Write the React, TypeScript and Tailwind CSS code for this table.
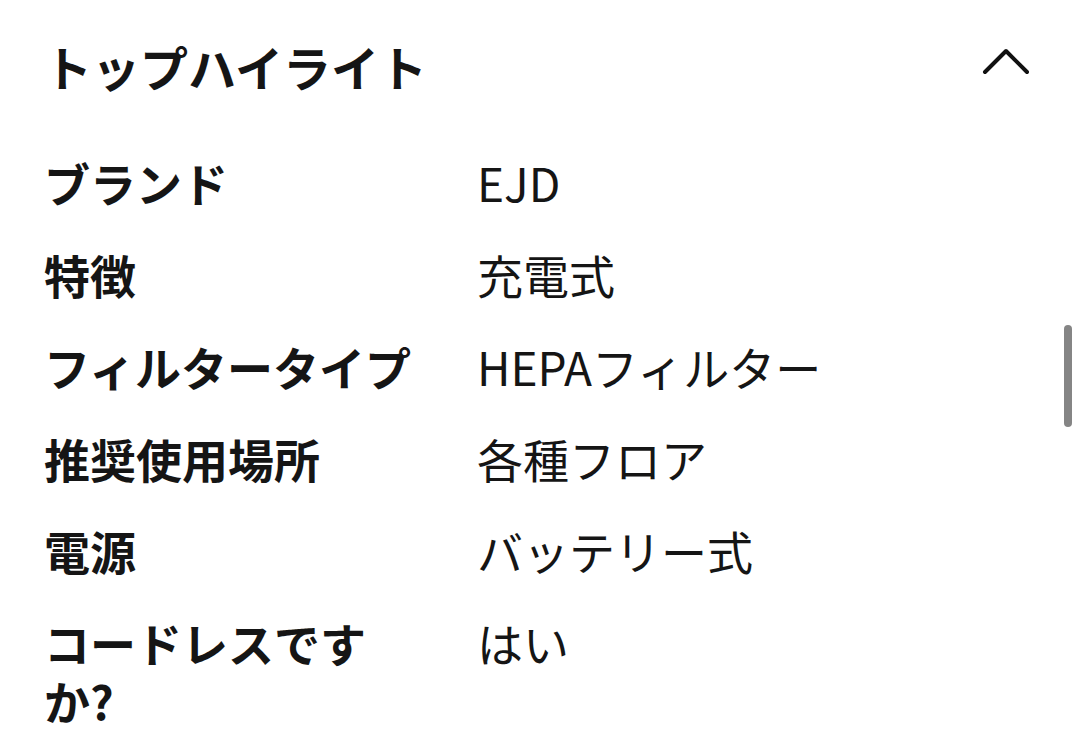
const rows: { label: string; value: string }[] = [
  { label: "ブランド", value: "EJD" },
  { label: "特徴", value: "充電式" },
  { label: "フィルタータイプ", value: "HEPAフィルター" },
  { label: "推奨使用場所", value: "各種フロア" },
  { label: "電源", value: "バッテリー式" },
  { label: "コードレスですか?", value: "はい" },
];

function ChevronUp() {
  return (
    <svg viewBox="0 0 48 48" className="h-[48px] w-[48px]" fill="none">
      <path d="M3 30 L24 9 L45 30" stroke="#111" strokeWidth="4" strokeLinecap="round" strokeLinejoin="round" />
    </svg>
  );
}

export default function App() {
  return (
    <div
      className="relative h-[744px] w-[1080px] overflow-hidden bg-white text-[#151515]"
      style={{ fontFamily: '"Noto Sans CJK JP", "Noto Sans", sans-serif' }}
    >
      <div className="pl-[44px] pr-[50px] pt-[37px]">
        <div className="flex items-center justify-between">
          <h2 className="text-[48px] font-bold leading-[58px]">トップハイライト</h2>
          <ChevronUp />
        </div>

        <div className="mt-[58px] flex flex-col gap-[34px]">
          {rows.map((r) => (
            <div key={r.label} className="grid grid-cols-[433px_1fr] text-[46px] leading-[58px]">
              <div className="pr-[53px] font-bold">{r.label}</div>
              <div className="font-normal">{r.value}</div>
            </div>
          ))}
        </div>
      </div>

      {/* overlay scrollbar */}
      <div className="absolute right-[8px] top-[325px] h-[102px] w-[8px] rounded-full bg-[#858585]" />
    </div>
  );
}
